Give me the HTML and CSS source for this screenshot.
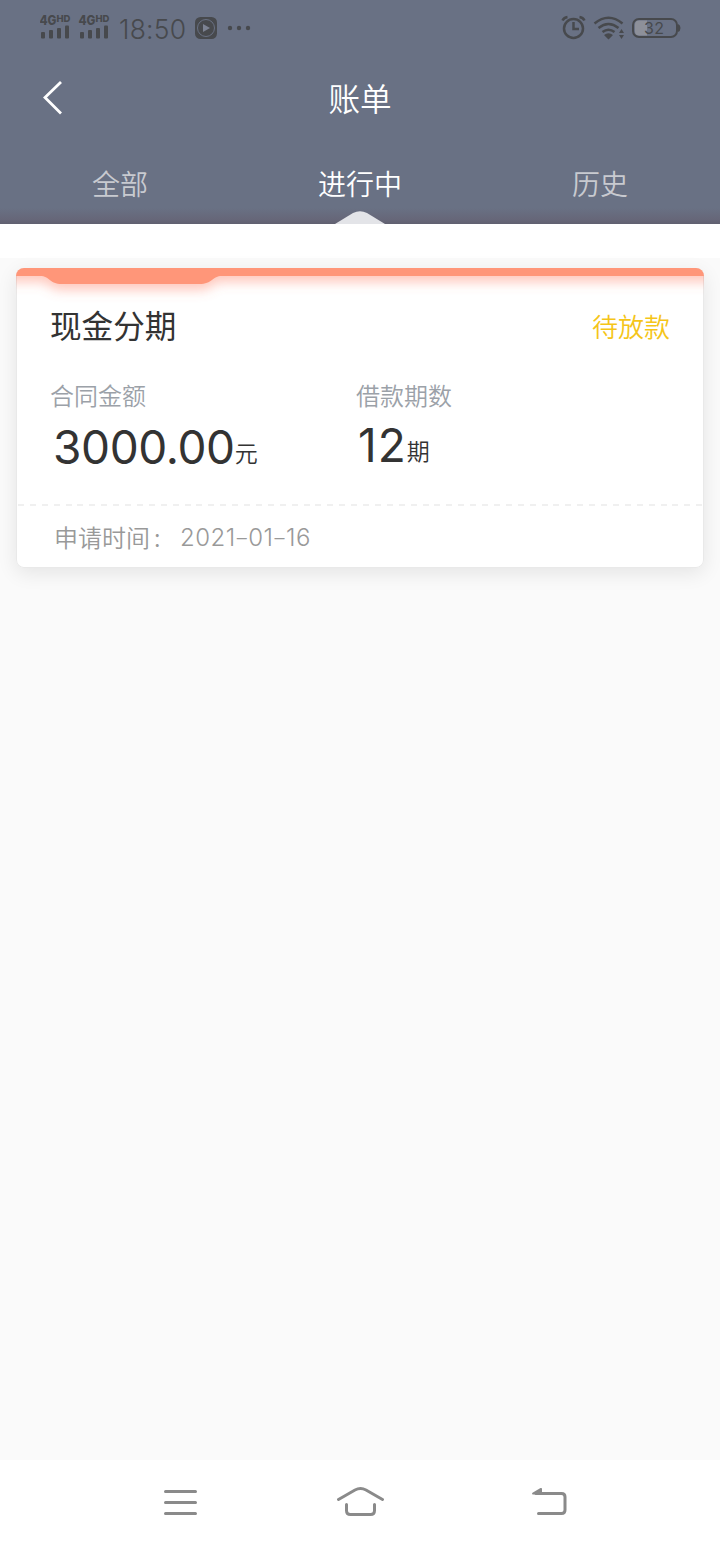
FILE: index.html
```html
<!DOCTYPE html>
<html lang="zh-CN">
<head>
    <meta charset="UTF-8">
    <meta name="viewport" content="width=device-width, initial-scale=1.0">
    <title>账单</title>
    <link rel="stylesheet" href="styles.css">
</head>
<body>
    <header class="header">
        <div class="status-bar">
            <svg class="signals" width="70" height="30" viewBox="40 12 70 30">
                <g id="signal">
                    <text class="net" x="39.5" y="25" textLength="17" lengthAdjust="spacingAndGlyphs">4G</text>
                    <text class="net-hd" x="56.5" y="22" textLength="14" lengthAdjust="spacingAndGlyphs">HD</text>
                    <rect x="41" y="32" width="4" height="6.500" rx="1"/>
                    <rect x="49" y="30" width="4" height="8.500" rx="1"/>
                    <rect x="57" y="28" width="4" height="10.500" rx="1"/>
                    <rect x="65" y="25.500" width="4" height="13" rx="1"/>
                </g>
                <use href="#signal" x="39"/>
            </svg>
            <span class="time">18:50</span>
            <svg class="notice" width="58" height="24" viewBox="195 16 58 24">
                <rect x="195" y="17" width="22" height="22" rx="5.500"/>
                <circle class="ring" cx="206" cy="28" r="8.500"/>
                <path class="play" d="M203 24l7 4-7 4z"/>
                <circle cx="230" cy="28" r="2.200"/>
                <circle cx="239" cy="28" r="2.200"/>
                <circle cx="248" cy="28" r="2.200"/>
            </svg>
            <svg class="device" width="120" height="30" viewBox="561 13 120 30">
                <g class="line">
                    <circle cx="573.500" cy="28.500" r="9.500"/>
                    <path d="M573.500 22v7h5.500M562.500 20.500q1.500-3 5-3.500M584.500 20.500q-1.500-3-5-3.500"/>
                    <path d="M594.500 23.500q14-11.500 28 0M598.500 28q10-8 20 0M602.500 32q6-4.500 12 0"/>
                </g>
                <path d="M604 35q4.500-3.500 9 0l-4.500 4.500zM619 33l2.500-4 2.500 4zM619 35l2.500 4 2.500-4z"/>
                <path class="level" d="M647 20.500h-8q-4 0-4 4v7q0 4 4 4h8z"/>
                <rect class="line battery-case" x="633" y="19" width="44" height="18" rx="6"/>
                <path d="M678 24q2.500 1 2.500 4t-2.500 4z"/>
                <text class="battery" x="644" y="34" textLength="20">32</text>
            </svg>
        </div>
        <div class="title-bar">
            <svg class="back" width="24" height="36" viewBox="0 0 24 36">
                <path d="M21 2L5 17.500 21 33.500"/>
            </svg>
            <h1 class="title">账单</h1>
        </div>
        <nav class="tabs">
            <a class="tab">全部</a>
            <a class="tab active">进行中
                <svg class="pointer" width="50" height="13" viewBox="0 0 50 13">
                    <path d="M0 13L18 2q7-3.500 14 0l18 11z"/>
                </svg>
            </a>
            <a class="tab">历史</a>
        </nav>
    </header>

    <main class="content">
        <section class="card">
            <svg class="card-top" width="688" height="46" viewBox="0 0 688 46">
                <defs>
                    <filter id="glow" x="-5%" y="-50%" width="110%" height="400%">
                        <feDropShadow dx="0" dy="6" stdDeviation="6" flood-color="#ff7657" flood-opacity=".4"/>
                    </filter>
                </defs>
                <path filter="url(#glow)" d="M-20-20H708V8H206C196 8 197 16 183 16H46C33 16 34 8 24 8H-20z"/>
            </svg>
            <div class="card-head">
                <h2 class="name">现金分期</h2>
                <span class="state">待放款</span>
            </div>
            <div class="figures">
                <div class="figure">
                    <p class="label">合同金额</p>
                    <p class="value amount"><span class="number">3000.00</span><span class="unit">元</span></p>
                </div>
                <div class="figure">
                    <p class="label">借款期数</p>
                    <p class="value"><span class="number months">12</span><span class="unit">期</span></p>
                </div>
            </div>
            <div class="card-foot">
                <span class="foot-label">申请时间</span><span class="colon">:</span><span class="date">2021<i>–</i>01<i>–</i>16</span>
            </div>
        </section>
    </main>

    <footer class="nav-bar">
        <svg width="36" height="32" viewBox="163 1486 36 32">
            <path d="M165.500 1491.500h30M165.500 1502.500h30M165.500 1513.500h30"/>
        </svg>
        <svg class="home" width="50" height="34" viewBox="336 1486 50 34">
            <path d="M338.500 1499.500L355 1490q5.500-3 11 0l16.500 9.500M346.500 1504.500v6q0 4 4 4h20q4 0 4-4v-6"/>
        </svg>
        <svg width="38" height="34" viewBox="531 1486 38 34">
            <path d="M536 1493.500h25.500q3.500 0 3.500 3.500v13q0 3.500-3.500 3.500h-23"/>
            <path class="arrow" d="M532.500 1494.500q-1-1 0-1.800l8-4.700q1.500-.5 1.500 1v5.500z"/>
        </svg>
    </footer>
</body>
</html>
```
FILE: styles.css
```css
* {
    box-sizing: border-box;
}

body {
    margin: 0;
    height: 1544px;
    display: flex;
    flex-direction: column;
    font-family: "Noto Sans CJK SC", sans-serif;
    font-weight: 350;
    background: #fafafa;
    color: #333;
}

h1, h2, p {
    margin: 0;
    font-weight: inherit;
}

svg {
    display: block;
    flex: none;
}

/* header */
.header {
    height: 224px;
    background: linear-gradient(#697184 0, #697184 208px, #666678 220px, #606070 224px);
    color: #fff;
}

.status-bar {
    display: flex;
    align-items: flex-start;
    height: 56px;
    padding: 12px 39px 0 40px;
    color: #47494d;
    fill: #47494d;
}

.net {
    font: 800 13.5px Inter, sans-serif;
}

.net-hd {
    font: 800 9.5px Inter, sans-serif;
}

.time {
    width: 76px;
    padding-left: 9px;
    font: 350 26.5px/34px Inter, sans-serif;
    letter-spacing: 0.2px;
    white-space: nowrap;
}

.notice {
    margin: 4px 0 0 9px;
}

.ring {
    fill: none;
    stroke: #697184;
    stroke-width: 1;
}

.play {
    fill: #7c8292;
}

.device {
    margin: 1px 0 0 auto;
}

.line {
    fill: none;
    stroke: #47494d;
    stroke-width: 2.5;
}

.battery-case {
    stroke-width: 2;
}

.level {
    fill: #8d909a;
}

.battery {
    font: 400 16px Inter, sans-serif;
}

.title-bar {
    display: grid;
    grid-template-columns: 60px 1fr 60px;
    align-items: center;
    height: 84px;
    padding: 0 40px;
}

.back path {
    fill: none;
    stroke: #fff;
    stroke-width: 2.8;
}

.title {
    padding-bottom: 3px;
    font-size: 31.6px;
    text-align: center;
}

.tabs {
    display: grid;
    grid-template-columns: repeat(3, 1fr);
    height: 84px;
}

.tab {
    position: relative;
    font-size: 28px;
    line-height: 86px;
    text-align: center;
    color: #c8cad0;
}

.tab.active {
    color: #fff;
}

.pointer {
    position: absolute;
    left: 95px;
    top: 71px;
    fill: #e3e4e8;
}

/* bill list */
.content {
    flex: 1;
    padding: 10px 16px;
    border-top: 34px solid #fff;
}

.card {
    height: 300px;
    border-radius: 8px;
    background: #fff;
    box-shadow: inset 0 0 0 1px #e9e9e9, 0 5px 20px rgba(0, 0, 0, .09);
    overflow: hidden;
}

.card-top {
    margin-bottom: -46px;
    fill: #ff9679;
}

.card-head {
    position: relative;
    display: flex;
    justify-content: space-between;
    padding: 32px 34px 0;
    line-height: 48px;
}

.name {
    font-size: 31.6px;
    font-weight: 400;
}

.state {
    font-size: 26px;
    line-height: 52px;
    color: #f5c518;
}

.figures {
    display: grid;
    grid-template-columns: 306px 1fr;
    height: 152px;
    padding: 25px 34px 0;
}

.label {
    font-size: 24px;
    line-height: 36px;
    color: #9ba1a8;
}

.value {
    height: 64px;
    font-size: 23px;
    line-height: 64px;
}

.amount {
    padding: 2px 0 0 3px;
}

.number {
    font-family: Inter, sans-serif;
    font-size: 46px;
    font-weight: 400;
    letter-spacing: -0.4px;
}

.months {
    padding-left: 2px;
    letter-spacing: 1px;
}

.unit {
    line-height: 1;
    vertical-align: 2px;
}

.card-foot {
    display: flex;
    height: 64px;
    padding-left: 38px;
    font-size: 24px;
    line-height: 65px;
    color: #999;
    background: repeating-linear-gradient(90deg, #f0f0f0 0 6px, transparent 6px 11.900px) 2px 0 / 684px 2px no-repeat;
}

.colon {
    width: 30px;
    padding-left: 4px;
}

.date {
    padding-top: 1px;
    font-family: Inter, sans-serif;
    letter-spacing: 0.5px;
}

.date i {
    padding: 0 1px;
    font-size: 20px;
    font-style: normal;
    vertical-align: 1px;
}

/* system navigation */
.nav-bar {
    display: flex;
    align-items: flex-start;
    justify-content: space-between;
    height: 84px;
    padding: 26px 151px 0 163px;
    background: #fff;
    fill: none;
    stroke: #8a8a8a;
    stroke-width: 3;
    stroke-linecap: round;
}

.home {
    margin-right: 8px;
}

.arrow {
    fill: #8a8a8a;
    stroke: none;
}
```
